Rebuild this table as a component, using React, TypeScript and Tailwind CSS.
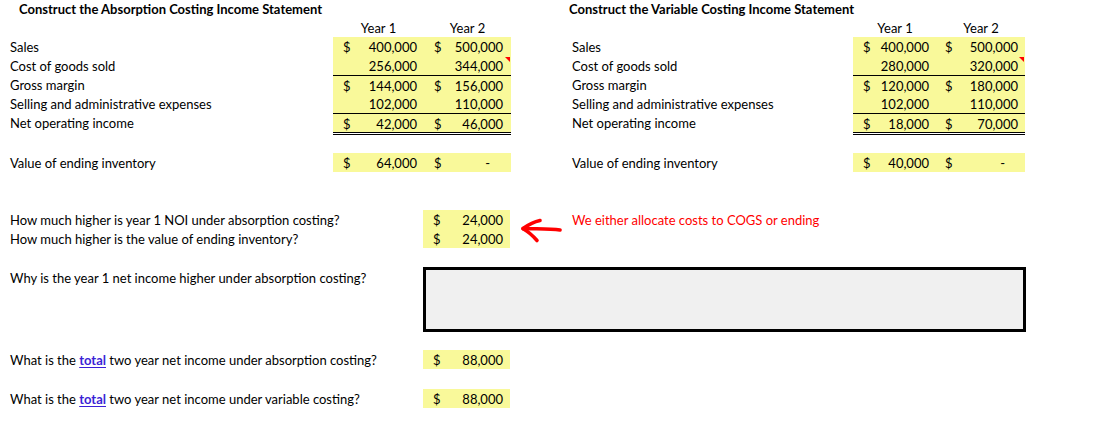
import React from "react";

type Line = {
  label: string;
  a: string;
  b: string;
  dollar?: boolean;
  rule?: boolean;
  note?: boolean;
};

const absorption: Line[] = [
  { label: "Sales", a: "400,000", b: "500,000", dollar: true },
  { label: "Cost of goods sold", a: "256,000", b: "344,000", note: true },
  { label: "Gross margin", a: "144,000", b: "156,000", dollar: true, rule: true },
  { label: "Selling and administrative expenses", a: "102,000", b: "110,000" },
  { label: "Net operating income", a: "42,000", b: "46,000", dollar: true, rule: true },
];

const variable: Line[] = [
  { label: "Sales", a: "400,000", b: "500,000", dollar: true },
  { label: "Cost of goods sold", a: "280,000", b: "320,000", note: true },
  { label: "Gross margin", a: "120,000", b: "180,000", dollar: true, rule: true },
  { label: "Selling and administrative expenses", a: "102,000", b: "110,000" },
  { label: "Net operating income", a: "18,000", b: "70,000", dollar: true, rule: true },
];

function Cell({ dollar, value, cls, note }: { dollar?: boolean; value: string; cls: string; note?: boolean }) {
  return (
    <div className={`relative flex items-center justify-between ${cls}`}>
      <span>{dollar ? "$" : ""}</span>
      <span className={value === "-" ? "mr-[13px]" : ""}>{value}</span>
      {note && (
        <span className="absolute right-[1px] top-[1px] h-0 w-0 border-l-[5px] border-t-[5px] border-l-transparent border-t-[#ff0000]" />
      )}
    </div>
  );
}

function Statement(props: {
  title: string;
  rows: Line[];
  ending: [string, string];
  titleCls: string;
  labelCls: string;
  yellowCls: string;
  c1: string;
  c2: string;
}) {
  const { title, rows, ending, titleCls, labelCls, yellowCls, c1, c2 } = props;
  return (
    <div>
      <div className={`h-[19px] leading-[19px] font-bold ${titleCls}`}>{title}</div>
      <div className="flex h-[18px] leading-[19px]">
        <div className={labelCls} />
        <div className={`grid ${yellowCls}`}>
          <div className="text-center">Year 1</div>
          <div className="text-center">Year 2</div>
        </div>
      </div>
      {rows.map((r, i) => (
        <div key={i} className="flex h-[19px] leading-[20px]">
          <div className={labelCls}>{r.label}</div>
          <div className={`grid bg-[#f9f99a] ${yellowCls} ${r.rule ? "border-t border-black" : ""}`}>
            <Cell dollar={r.dollar} value={r.a} cls={c1} />
            <Cell dollar={r.dollar} value={r.b} cls={c2} note={r.note} />
          </div>
        </div>
      ))}
      <div className="flex">
        <div className={labelCls} />
        <div className={`h-[4px] border-t-[3px] border-double border-black ${yellowCls}`} />
      </div>
      <div className="mt-[17px] flex h-[19px] leading-[20px]">
        <div className={labelCls}>Value of ending inventory</div>
        <div className={`grid bg-[#f9f99a] ${yellowCls}`}>
          <Cell dollar value={ending[0]} cls={c1} />
          <Cell dollar value={ending[1]} cls={c2} />
        </div>
      </div>
    </div>
  );
}

function Answer({ value }: { value: string }) {
  return (
    <div className="flex w-[87px] items-center justify-between bg-[#f9f99a] pl-[10px] pr-[7px]">
      <span>$</span>
      <span>{value}</span>
    </div>
  );
}

function Total() {
  return <span className="font-bold text-[#3a1fd6] underline underline-offset-2">total</span>;
}

export default function App() {
  return (
    <div className="h-[424px] w-[1096px] overflow-hidden bg-white font-['Lato','Liberation_Sans',sans-serif] text-[13px] text-black">
      <div className="flex">
        <div className="w-[560px]">
          <Statement
            title="Construct the Absorption Costing Income Statement"
            rows={absorption}
            ending={["64,000", "-"]}
            titleCls="pl-[19px]"
            labelCls="w-[333px] shrink-0 pl-[10px]"
            yellowCls="w-[178px] grid-cols-[91px_87px]"
            c1="pl-[10px] pr-[7px]"
            c2="pl-[10px] pr-[8px]"
          />
        </div>
        <div className="w-[536px]">
          <Statement
            title="Construct the Variable Costing Income Statement"
            rows={variable}
            ending={["40,000", "-"]}
            titleCls="pl-[9px]"
            labelCls="w-[293px] shrink-0 pl-[12px]"
            yellowCls="w-[172px] grid-cols-[84px_88px]"
            c1="pl-[10px] pr-[8px]"
            c2="pl-[8px] pr-[7px]"
          />
        </div>
      </div>

      <div className="mt-[38px] flex items-start">
        <div>
          <div className="flex h-[19px] leading-[20px]">
            <div className="w-[423px] pl-[10px]">How much higher is year 1 NOI under absorption costing?</div>
            <Answer value="24,000" />
          </div>
          <div className="flex h-[19px] leading-[20px]">
            <div className="w-[423px] pl-[10px]">How much higher is the value of ending inventory?</div>
            <Answer value="24,000" />
          </div>
        </div>
        <svg className="ml-[10px] mt-[8px]" width="42" height="26" viewBox="0 0 42 26" fill="none">
          <path d="M40 12 C30 10.5 18 11 3 10.5" stroke="#ff0000" strokeWidth="3.6" strokeLinecap="round" />
          <path d="M3 10.5 C8 7 13 4 20 2.5" stroke="#ff0000" strokeWidth="3.6" strokeLinecap="round" />
          <path d="M3.5 11 C9 14 13 18 17 22.5" stroke="#ff0000" strokeWidth="3.6" strokeLinecap="round" />
        </svg>
        <div className="ml-[10px] h-[19px] leading-[21px] text-[#ff0000]">We either allocate costs to COGS or ending</div>
      </div>

      <div className="mt-[19px] flex">
        <div className="w-[423px] pl-[10px] pt-[2px] leading-[19px]">Why is the year 1 net income higher under absorption costing?</div>
        <div className="h-[65px] w-[603px] border-[3px] border-black bg-[#f0f0f0]" />
      </div>

      <div className="mt-[18px] flex h-[19px] leading-[20px]">
        <div className="w-[423px] pl-[10px]">
          What is the <Total /> two year net income under absorption costing?
        </div>
        <Answer value="88,000" />
      </div>
      <div className="mt-[20px] flex h-[19px] leading-[20px]">
        <div className="w-[423px] pl-[10px]">
          What is the <Total /> two year net income under variable costing?
        </div>
        <Answer value="88,000" />
      </div>
    </div>
  );
}
